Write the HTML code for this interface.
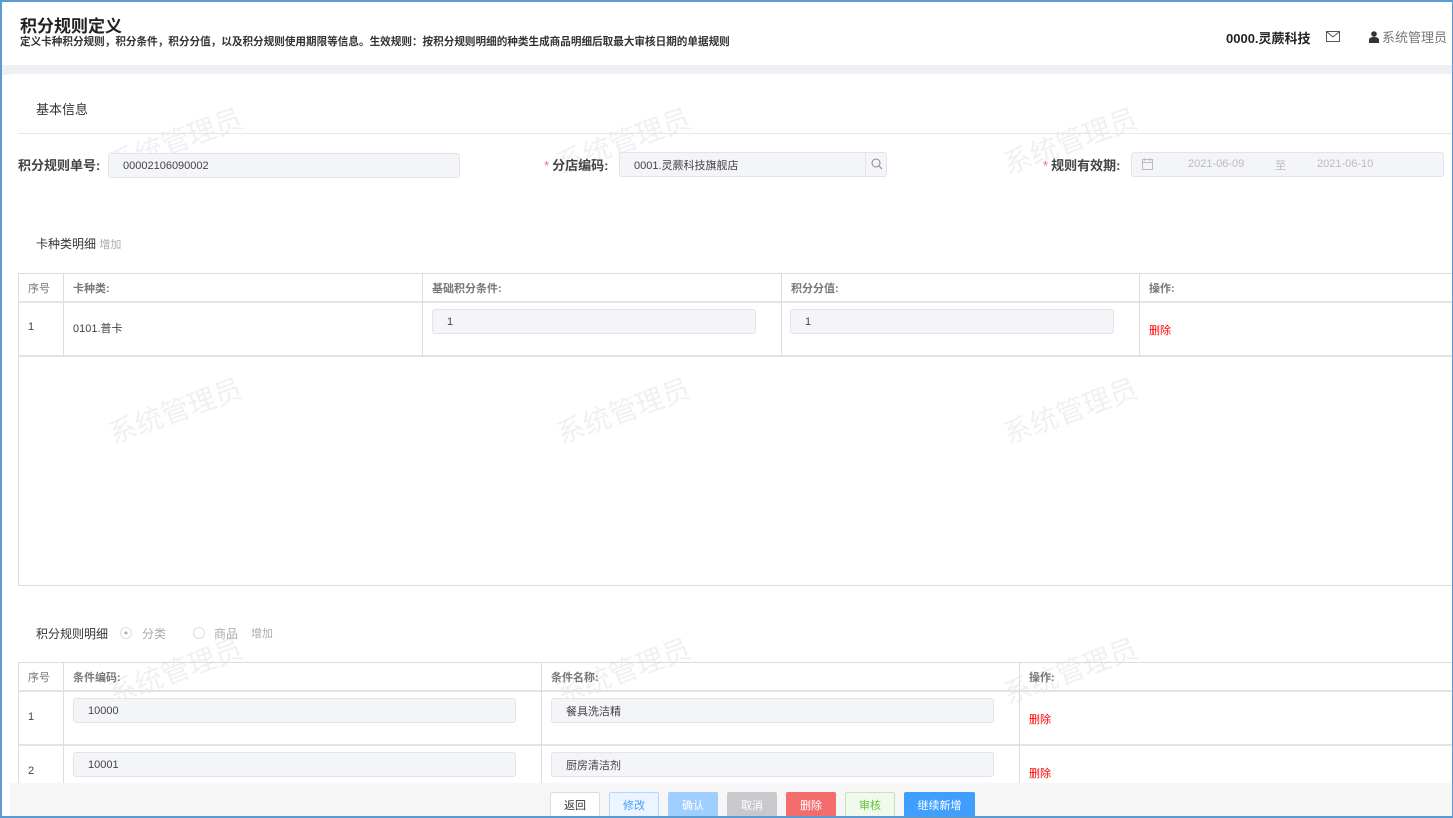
<!DOCTYPE html>
<html><head><meta charset="utf-8">
<style>
*{box-sizing:border-box;margin:0;padding:0}
body{width:1453px;height:818px;overflow:hidden;background:#fff;font-family:"Liberation Sans","Noto Sans CJK SC",sans-serif;color:#333;position:relative;font-size:12px}
.frame{position:absolute;inset:0;border:2px solid #5b9bd5;border-right:1px solid #5b9bd5;pointer-events:none;z-index:10}
.a{position:absolute}
.inp{position:absolute;background:#f4f5f8;border:1px solid #e2e4ea;border-radius:3px;font-size:11px;color:#444;padding-left:14px;display:flex;align-items:center}
.lbl{position:absolute;font-size:13px;font-weight:bold;color:#444}
.req{color:#f56c6c;font-weight:normal;margin-right:3px}
.wm{position:absolute;font-size:28px;color:rgba(0,0,0,0.06);transform:rotate(-20deg);white-space:nowrap}
.tb{position:absolute;border:1px solid #ddd}
.vl{position:absolute;width:1px;background:#ddd}
.hl{position:absolute;height:2px;background:#e3e3e3}
.th{position:absolute;font-size:11px;color:#777;font-weight:bold}
.td{position:absolute;font-size:11px;color:#444}
.del{position:absolute;color:#f00;font-size:11px}
.btn{position:absolute;top:792px;height:25px;width:50px;border-radius:2px;font-size:11px;display:flex;align-items:center;justify-content:center}
</style></head><body>
<div class="frame"></div>
<div class="a" style="left:20px;top:12px;font-size:17px;font-weight:bold;color:#222">积分规则定义</div>
<div class="a" style="left:20px;top:34px;font-size:10.6px;font-weight:bold;color:#333;white-space:nowrap">定义卡种积分规则，积分条件，积分分值，以及积分规则使用期限等信息。生效规则：按积分规则明细的种类生成商品明细后取最大审核日期的单据规则</div>
<div class="a" style="left:1226px;top:28px;font-size:13px;font-weight:bold;color:#222">0000.灵蕨科技</div>
<svg class="a" style="left:1326px;top:31px" width="14" height="11" viewBox="0 0 14 11"><rect x="0.5" y="0.5" width="13" height="10" fill="none" stroke="#555"/><path d="M1 1l6 5 6-5" fill="none" stroke="#555"/></svg>
<svg class="a" style="left:1369px;top:31px" width="10" height="12" viewBox="0 0 10 12"><circle cx="5" cy="3" r="2.8" fill="#333"/><path d="M0 12v-3c0-2 2-3 5-3s5 1 5 3v3z" fill="#333"/></svg>
<div class="a" style="left:1382px;top:27px;font-size:13px;color:#777">系统管理员</div>
<div class="a" style="left:0;top:65px;width:1453px;height:10px;background:#eef0f3"></div>
<div class="a" style="left:10px;top:74px;width:1443px;height:710px;background:#fff"></div>

<div class="wm" style="left:105px;top:120px">系统管理员</div>
<div class="wm" style="left:553px;top:120px">系统管理员</div>
<div class="wm" style="left:1000px;top:120px">系统管理员</div>
<div class="wm" style="left:105px;top:390px">系统管理员</div>
<div class="wm" style="left:553px;top:390px">系统管理员</div>
<div class="wm" style="left:1000px;top:390px">系统管理员</div>
<div class="wm" style="left:105px;top:650px">系统管理员</div>
<div class="wm" style="left:553px;top:650px">系统管理员</div>
<div class="wm" style="left:1000px;top:650px">系统管理员</div>

<div class="a" style="left:36px;top:99px;font-size:13px;color:#333">基本信息</div>
<div class="a" style="left:18px;top:133px;width:1435px;height:1px;background:#e6e6e6"></div>

<div class="lbl" style="left:18px;top:155px">积分规则单号:</div>
<div class="inp" style="left:108px;top:153px;width:352px;height:25px">00002106090002</div>
<div class="lbl" style="left:544px;top:155px"><span class="req">*</span>分店编码:</div>
<div class="inp" style="left:619px;top:152px;width:268px;height:25px">0001.灵蕨科技旗舰店</div>
<div class="a" style="left:865px;top:152px;width:1px;height:25px;background:#e2e4ea"></div>
<svg class="a" style="left:871px;top:158px" width="12" height="12" viewBox="0 0 12 12"><circle cx="5" cy="5" r="4" fill="none" stroke="#888"/><path d="M8 8l3 3" stroke="#888"/></svg>
<div class="lbl" style="left:1043px;top:155px"><span class="req">*</span>规则有效期:</div>
<div class="inp" style="left:1131px;top:152px;width:313px;height:25px;color:#bbb"></div>
<svg class="a" style="left:1142px;top:158px" width="11" height="12" viewBox="0 0 11 12"><rect x="0.5" y="1.5" width="10" height="10" fill="none" stroke="#bbb"/><path d="M0.5 4.5h10M3 0v3M8 0v3" stroke="#bbb"/></svg>
<div class="a" style="left:1188px;top:158px;font-size:11px;color:#bbb">2021-06-09</div>
<div class="a" style="left:1275px;top:157px;font-size:11px;color:#bbb">至</div>
<div class="a" style="left:1317px;top:158px;font-size:11px;color:#bbb">2021-06-10</div>

<div class="a" style="left:36px;top:235px;font-size:12px;color:#333">卡种类明细 <span style="color:#aaa;font-size:11px">增加</span></div>

<div class="tb" style="left:18px;top:273px;width:1436px;height:313px"></div>
<div class="hl" style="left:18px;top:301px;width:1435px"></div>
<div class="hl" style="left:18px;top:355px;width:1435px"></div>
<div class="vl" style="left:63px;top:274px;height:82px"></div>
<div class="vl" style="left:422px;top:274px;height:82px"></div>
<div class="vl" style="left:781px;top:274px;height:82px"></div>
<div class="vl" style="left:1139px;top:274px;height:82px"></div>
<div class="th" style="left:28px;top:280px;font-weight:normal">序号</div>
<div class="th" style="left:73px;top:280px">卡种类:</div>
<div class="th" style="left:432px;top:280px">基础积分条件:</div>
<div class="th" style="left:791px;top:280px">积分分值:</div>
<div class="th" style="left:1149px;top:280px">操作:</div>
<div class="td" style="left:28px;top:321px">1</div>
<div class="td" style="left:73px;top:320px">0101.普卡</div>
<div class="inp" style="left:432px;top:309px;width:324px;height:25px">1</div>
<div class="inp" style="left:790px;top:309px;width:324px;height:25px">1</div>
<div class="del" style="left:1149px;top:322px">删除</div>

<div class="a" style="left:36px;top:625px;font-size:12px;color:#333">积分规则明细</div>
<svg class="a" style="left:120px;top:627px" width="12" height="12"><circle cx="6" cy="6" r="5.5" fill="#fff" stroke="#ddd"/><circle cx="6" cy="6" r="1.5" fill="#aaa"/></svg>
<div class="a" style="left:142px;top:625px;font-size:12px;color:#aaa">分类</div>
<svg class="a" style="left:193px;top:627px" width="12" height="12"><circle cx="6" cy="6" r="5.5" fill="#fff" stroke="#ddd"/></svg>
<div class="a" style="left:214px;top:625px;font-size:12px;color:#aaa">商品</div>
<div class="a" style="left:251px;top:625px;font-size:11px;color:#aaa">增加</div>

<div class="tb" style="left:18px;top:662px;width:1436px;height:125px"></div>
<div class="hl" style="left:18px;top:690px;width:1435px"></div>
<div class="hl" style="left:18px;top:744px;width:1435px"></div>
<div class="vl" style="left:63px;top:663px;height:122px"></div>
<div class="vl" style="left:541px;top:663px;height:122px"></div>
<div class="vl" style="left:1019px;top:663px;height:122px"></div>
<div class="th" style="left:28px;top:669px;font-weight:normal">序号</div>
<div class="th" style="left:73px;top:669px">条件编码:</div>
<div class="th" style="left:551px;top:669px">条件名称:</div>
<div class="th" style="left:1029px;top:669px">操作:</div>
<div class="td" style="left:28px;top:711px">1</div>
<div class="inp" style="left:73px;top:698px;width:443px;height:25px">10000</div>
<div class="inp" style="left:551px;top:698px;width:443px;height:25px">餐具洗洁精</div>
<div class="del" style="left:1029px;top:711px">删除</div>
<div class="td" style="left:28px;top:765px">2</div>
<div class="inp" style="left:73px;top:752px;width:443px;height:25px">10001</div>
<div class="inp" style="left:551px;top:752px;width:443px;height:25px">厨房清洁剂</div>
<div class="del" style="left:1029px;top:765px">删除</div>

<div class="a" style="left:10px;top:783px;width:1443px;height:35px;background:#f6f6f6"></div>
<div class="btn" style="left:550px;background:#fff;border:1px solid #ddd;color:#333">返回</div>
<div class="btn" style="left:609px;background:#ecf5ff;border:1px solid #b3d8ff;color:#409eff">修改</div>
<div class="btn" style="left:668px;background:#a0cfff;color:#fff">确认</div>
<div class="btn" style="left:727px;background:#c8c9cc;color:#fff">取消</div>
<div class="btn" style="left:786px;background:#f56c6c;color:#fff">删除</div>
<div class="btn" style="left:845px;background:#f0f9eb;border:1px solid #c2e7b0;color:#67c23a">审核</div>
<div class="btn" style="left:904px;width:71px;background:#409eff;color:#fff">继续新增</div>
</body></html>
